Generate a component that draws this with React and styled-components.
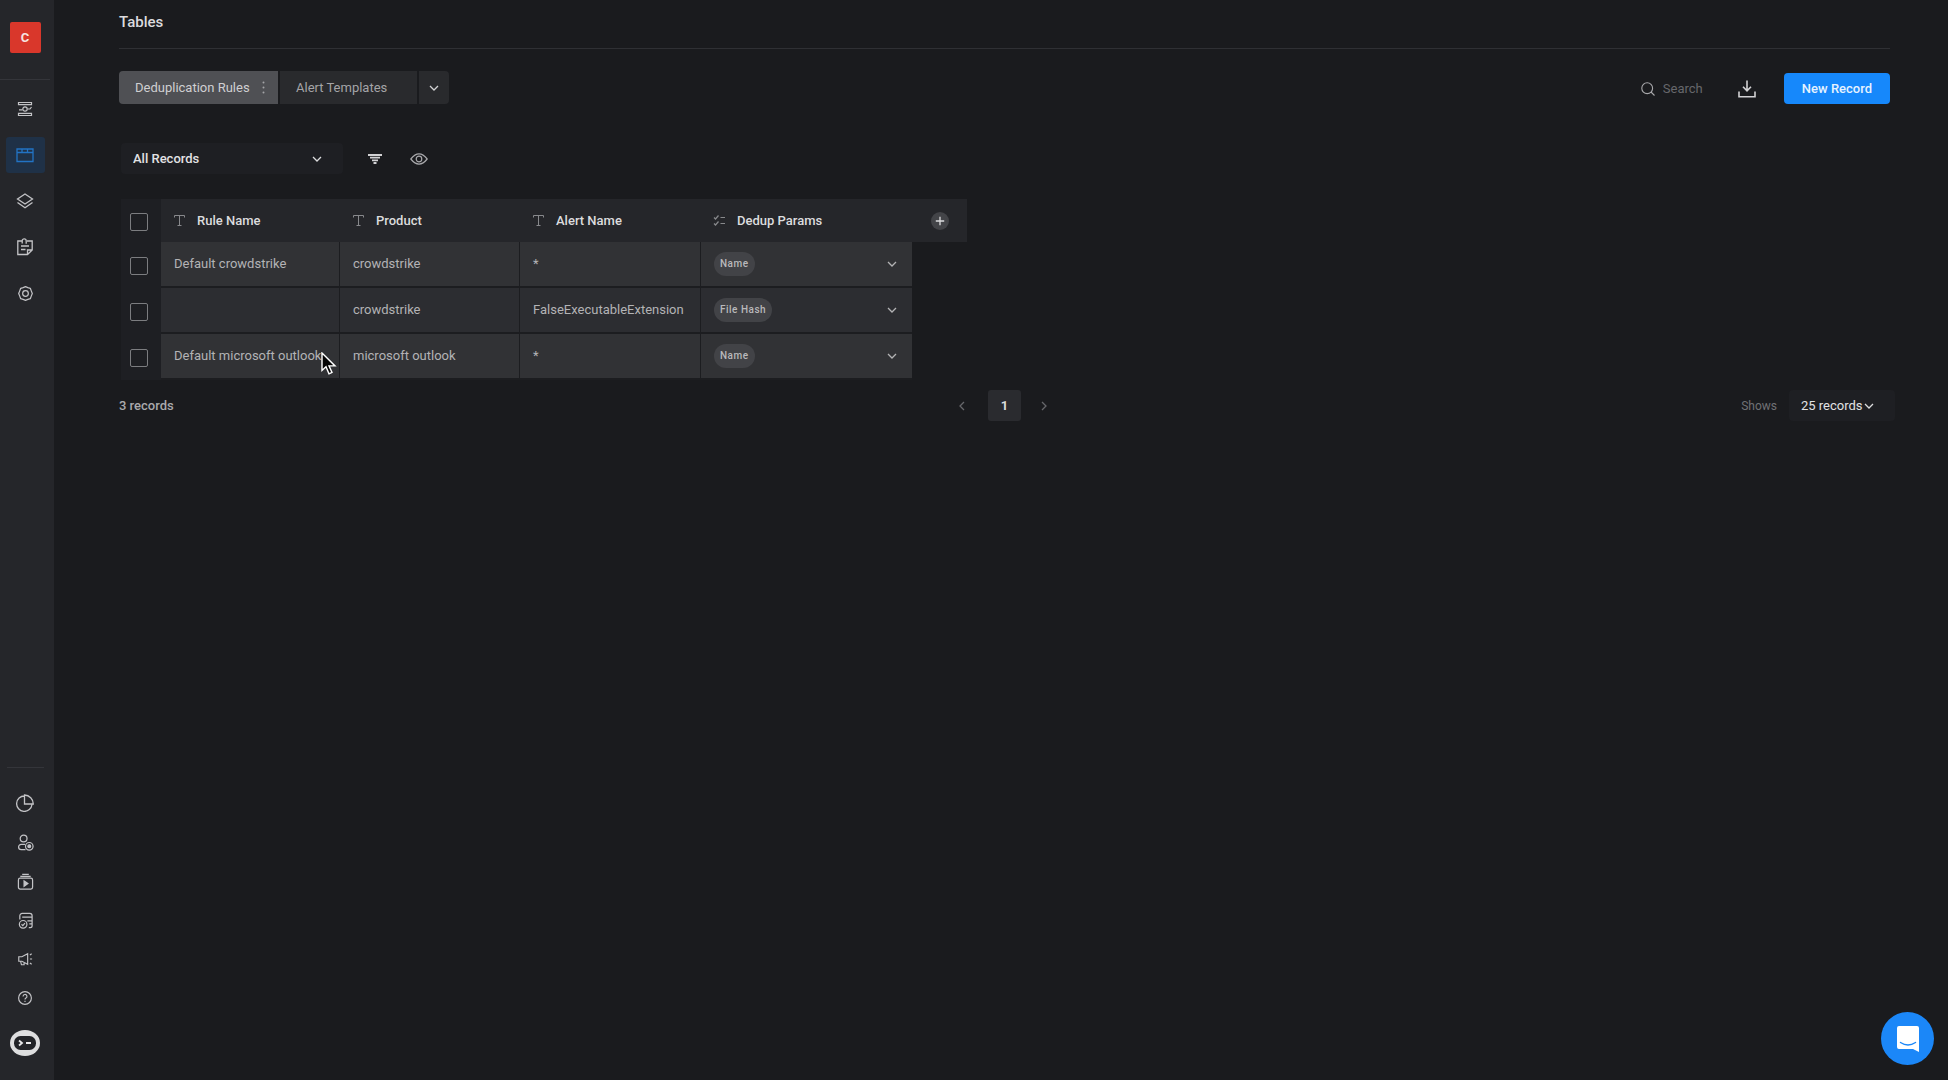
import React from "react";
import styled, { createGlobalStyle } from "styled-components";

const Global = createGlobalStyle`
  * { box-sizing: border-box; }
  body {
    margin: 0;
    background: #1a1b1e;
    color: #dcdcde;
    font: 13px/16px Roboto, "Liberation Sans", sans-serif;
  }
  button, input, select { font: inherit; color: inherit; }
  button { border: 0; padding: 0; background: none; cursor: pointer; }
  svg { display: block; flex: none; }
`;

const Shell = styled.div`
  display: flex;
  min-height: 100vh;
`;

const Sidebar = styled.nav`
  display: flex;
  flex-direction: column;
  align-items: center;
  width: 54px;
  padding: 22px 4px 24px 0;
  background: #25262a;
`;

const Workspace = styled.button`
  width: 31px;
  height: 31px;
  border-radius: 2px;
  background: #d9372b;
  color: #f6e3e0;
  font-weight: 700;
`;

const SideRule = styled.hr`
  width: ${(p) => (p.$short ? "37px" : "50px")};
  height: 1px;
  margin: ${(p) => (p.$short ? "auto 0 20px" : "26px 0 11px")};
  border: 0;
  background: #34353a;
`;

const SideGroup = styled.div`
  display: flex;
  flex-direction: column;
  align-items: center;
  gap: ${(p) => (p.$tight ? "9px" : "10px")};
`;

const SideLink = styled.a`
  display: grid;
  place-items: center;
  width: 39px;
  height: ${(p) => (p.$small ? "30px" : "36px")};
  border-radius: 3px;
  background: ${(p) => (p.$active ? "#1f3147" : "transparent")};
  color: ${(p) => (p.$active ? "#2273c4" : "#c3c3c6")};
`;

const Avatar = styled.button`
  display: grid;
  place-items: center;
  width: 30px;
  height: 26px;
  margin-top: 17px;
  border-radius: 50%;
  background: #dededf;
`;

const Main = styled.main`
  flex: 1;
  min-width: 0;
  padding: 0 58px 0 65px;
`;

const PageHeader = styled.header`
  padding: 13px 0 17px;
  border-bottom: 1px solid #2f3034;
`;

const Title = styled.h1`
  margin: 0;
  font-size: 15px;
  line-height: 18px;
  font-weight: 500;
`;

const TopBar = styled.div`
  display: flex;
  align-items: center;
  justify-content: space-between;
  margin-top: 22px;
`;

const Tabs = styled.div`
  display: flex;
  gap: 2px;
`;

const Tab = styled.button`
  display: flex;
  align-items: center;
  justify-content: space-between;
  width: ${(p) => p.$width};
  height: 33px;
  padding: 0 10px 0 16px;
  border-radius: ${(p) => (p.$active ? "4px 0 0 4px" : "0")};
  background: ${(p) => (p.$active ? "#4f5054" : "#292a2d")};
  color: ${(p) => (p.$active ? "#cfcfd1" : "#a4a4a7")};
`;

const MoreTabs = styled.button`
  display: grid;
  place-items: center;
  width: 30px;
  height: 33px;
  border-radius: 0 4px 4px 0;
  background: #292a2d;
  color: #d2d2d4;
`;

const Actions = styled.div`
  display: flex;
  align-items: center;
  padding-top: 2px;
`;

const SearchBox = styled.label`
  display: flex;
  align-items: center;
  gap: 8px;
  color: #a9a9ac;
`;

const SearchInput = styled.input`
  width: 72px;
  padding: 0;
  border: 0;
  outline: 0;
  background: none;
  &::placeholder { color: #66676b; opacity: 1; }
`;

const IconButton = styled.button`
  display: grid;
  place-items: center;
  width: 24px;
  height: 24px;
  color: ${(p) => p.$color || "#d2d2d4"};
`;

const Primary = styled.button`
  height: 31px;
  margin-left: 25px;
  padding: 0 18px;
  border-radius: 4px;
  background: #1688fb;
  color: #e6f3ff;
  font-weight: 500;
`;

const Filters = styled.div`
  display: flex;
  align-items: center;
  gap: 20px;
  margin-top: 39px;
  padding-left: 2px;
`;

const Picker = styled.div`
  display: grid;
  grid-template-columns: 1fr ${(p) => p.$inset};
  align-items: center;
  width: ${(p) => p.$width};
  height: 31px;
  border-radius: 4px;
  background: #1e1f23;

  select {
    grid-area: 1 / 1 / 2 / 3;
    width: 100%;
    height: 31px;
    padding: 0 12px;
    border: 0;
    outline: 0;
    appearance: none;
    background: none;
    font-weight: ${(p) => (p.$plain ? 400 : 500)};
    color: #e2e2e4;
  }
  option { background: #25262a; }
  svg {
    grid-area: 1 / 2 / 2 / 3;
    pointer-events: none;
  }
`;

const Table = styled.table`
  table-layout: fixed;
  width: 846px;
  margin: 25px 0 0 2px;
  border-spacing: 0;
`;

const HeadCell = styled.th`
  width: ${(p) => p.$width};
  height: 43px;
  padding: 0 0 0 12px;
  background: #25262a;
  text-align: left;
  font-weight: 500;
`;

const HeadLabel = styled.span`
  display: flex;
  align-items: center;
  gap: 11px;
  svg { color: #88898c; }
`;

const CheckHead = styled.th`
  width: 40px;
  padding: 2px 0 0 9px;
  background: #1e1f23;
`;

const CheckCell = styled.td`
  padding: 2px 0 0 9px;
  background: #1e1f23;
`;

const Check = styled.input.attrs({ type: "checkbox" })`
  display: block;
  width: 18px;
  height: 18px;
  margin: 0;
  appearance: none;
  border: 1px solid #7c7d80;
  border-radius: 2px;
  &:checked { background: #1688fb; }
`;

const Cell = styled.td`
  position: relative;
  height: 46px;
  padding: 0 0 0 13px;
  border-right: ${(p) => (p.$last ? 0 : "1px")} solid #1c1d20;
  border-bottom: 2px solid #1c1d20;
  background: ${(p) => (p.$alt ? "#2c2d31" : "#313235")};
  color: #b3b3b5;
  white-space: nowrap;
`;

const ParamPicker = styled.button`
  display: flex;
  align-items: center;
  justify-content: space-between;
  width: 100%;
  padding-right: 14px;
`;

const Chip = styled.span`
  padding: 4px 6px;
  border-radius: 12px;
  background: #424347;
  color: #b9b9bb;
  font-size: 10px;
  font-weight: 500;
  letter-spacing: 0.5px;
`;

const AddColumn = styled.button`
  display: grid;
  place-items: center;
  width: 18px;
  height: 18px;
  margin-left: 7px;
  border-radius: 50%;
  background: #434448;
`;

const Cursor = styled.svg`
  position: absolute;
  left: 160px;
  top: 18px;
  z-index: 1;
`;

const Footer = styled.footer`
  display: grid;
  grid-template-columns: 1fr auto 1fr;
  align-items: center;
  margin-top: 10px;
`;

const Count = styled.span`
  color: #a9a9ac;
  font-weight: 500;
`;

const Pager = styled.div`
  display: flex;
  align-items: center;
  gap: 14px;
`;

const Page = styled.button`
  width: 33px;
  height: 31px;
  border-radius: 3px;
  background: #2a2b2f;
  font-weight: 700;
`;

const PageSize = styled.div`
  display: flex;
  align-items: center;
  justify-content: flex-end;
  gap: 12px;
  margin-right: -5px;
  label {
    color: #707175;
    font-size: 12px;
  }
`;

const Chat = styled.button`
  position: fixed;
  right: 14px;
  bottom: 15px;
  display: grid;
  place-items: center;
  width: 53px;
  height: 53px;
  border-radius: 50%;
  background: #1b87f8;
`;

const Icon = ({ size = 18, w = 1.3, box = 18, children }) => (
  <svg
    width={size}
    height={size}
    viewBox={`0 0 ${box} ${box}`}
    fill="none"
    stroke="currentColor"
    strokeWidth={w}
    aria-hidden="true"
  >
    {children}
  </svg>
);

const Chevron = ({ d = "M2 4l4 4 4-4", w = 1.3 }) => (
  <Icon size={12} box={12} w={w}><path d={d} /></Icon>
);

const TextType = () => (
  <Icon size={13} box={13} w={1}>
    <path d="M1.5 3.5v-2h10v2M6.5 1.5v10M4.5 11.5h4" />
  </Icon>
);

const ListType = () => (
  <Icon size={13} box={13} w={1.2}>
    <path d="M1 3.5l1.5 1.5L5.5 1.5M7.5 3.5H12M1 9.5 2.5 11l3-3.5M7.5 9.5H12" />
  </Icon>
);

const mainNav = [
  ["Workflows", <Icon size={16} box={16} w={1.2}><path d="M1.5 1.5h13v2.2h-13zM1.5 12.3h13v2.2h-13zM2 8.8h3.5M10.5 8H13l1.5-2" /><circle cx="8" cy="8" r="2.2" /></Icon>],
  ["Tables", <Icon><path d="M1 3h16v12.5H1zM1 6.5h16M6 3v3.5M11.5 3v3.5" /></Icon>],
  ["Layers", <Icon><path d="M9 2 16.5 7 9 12 1.5 7zM1.5 10.5 9 15.8l7.5-5.3" /></Icon>],
  ["Notes", <Icon><path d="M6 3H1.8v13.5h9.7l4.7-4.5V3H11M5 8h8M5 11.5h4.5M11.5 16.5V12h4.7M6.2 5.5V2.8a2 2 0 0 1 4 0v3" /></Icon>],
  ["Settings", <Icon size={17}><path d="M9 1.8l2.5.9 2.6.8 1 2.7L16.2 9l-1.1 2.8-1 2.7-2.6.8-2.5.9-2.5-.9-2.6-.8-1-2.7L1.8 9l1.1-2.8 1-2.7 2.6-.8z" strokeLinejoin="round" /><circle cx="9" cy="9" r="3" /></Icon>],
];

const toolNav = [
  ["Reports", <Icon><path d="M8.5 2A7.7 7.7 0 1 0 16 10.5M8.5 1v9h8.8A9 9 0 0 0 8.5 1z" /></Icon>],
  ["Users", <Icon size={17}><circle cx="7" cy="4.8" r="3.6" /><path d="M8.5 11h-4a2.8 2.8 0 0 0 0 5.6H9" /><circle cx="13" cy="13" r="4" /><circle cx="13" cy="13" r="1.5" fill="currentColor" /></Icon>],
  ["Playbooks", <Icon size={17}><path d="M5.5 1.4h7M3.5 3.5h11" /><rect x="1.5" y="5.5" width="15" height="11.5" rx="1.8" /><path d="M7.5 8.5V14l4-2.8z" fill="currentColor" /></Icon>],
  ["Audit", <Icon size={17}><path d="M3 8V4a2.5 2.5 0 0 1 2.5-2.5h8A2.5 2.5 0 0 1 16 4v10.5a2 2 0 0 1-2 2h-1.5M5.5 5.5H16M11 9.5h5M13 12.5h3" /><circle cx="6.5" cy="13" r="4" /><path d="M4.8 13l1.4 1.4 2.2-2.6" /></Icon>],
  ["Announcements", <Icon size={16}><path d="M2 6.5h3.5L12 3v12l-6.5-3.5H2zM4 11.5l1 4h3v-3M14.5 4.5l2-1.5M14.5 9H17M14.5 13.5l2 1.5" /></Icon>],
  ["Help", <Icon size={16}><circle cx="9" cy="9" r="7.2" /><path d="M6.8 7.2a2.2 2.2 0 1 1 3.3 1.9c-.8.5-1.1.8-1.1 1.6M9 12.2v1.3" /></Icon>],
];

const rows = [
  ["Default crowdstrike", "crowdstrike", "*", "Name"],
  ["", "crowdstrike", "FalseExecutableExtension", "File Hash"],
  ["Default microsoft outlook", "microsoft outlook", "*", "Name"],
];

const columns = [
  ["Rule Name", "179px", TextType],
  ["Product", "180px", TextType],
  ["Alert Name", "181px", TextType],
  ["Dedup Params", "211px", ListType],
];

const SideLinks = ({ items, small, active }) =>
  items.map(([name, icon]) => (
    <SideLink key={name} href="#" aria-label={name} $small={small} $active={name === active}>
      {icon}
    </SideLink>
  ));

export default function App() {
  return (
    <>
      <Global />
      <Shell>
        <Sidebar>
          <Workspace>C</Workspace>
          <SideRule />
          <SideGroup><SideLinks items={mainNav} active="Tables" /></SideGroup>
          <SideRule $short />
          <SideGroup $tight><SideLinks items={toolNav} small /></SideGroup>
          <Avatar aria-label="Account">
            <svg width="22" height="14" viewBox="0 0 22 14">
              <rect width="22" height="14" rx="6.5" fill="#222327" />
              <path d="M5 4.5 8 7 5 9.5M12 7h5" fill="none" stroke="#e8e8e9" strokeWidth="1.8" />
            </svg>
          </Avatar>
        </Sidebar>

        <Main>
          <PageHeader><Title>Tables</Title></PageHeader>

          <TopBar>
            <Tabs>
              <Tab $active $width="159px">
                Deduplication Rules
                <svg width="9" height="13" viewBox="0 0 9 13" fill="#a4a4a7" aria-hidden="true">
                  <circle cx="4.5" cy="1.5" r="1" /><circle cx="4.5" cy="6.5" r="1" /><circle cx="4.5" cy="11.5" r="1" />
                </svg>
              </Tab>
              <Tab $width="137px">Alert Templates</Tab>
              <MoreTabs aria-label="More tables"><Chevron /></MoreTabs>
            </Tabs>
            <Actions>
              <SearchBox>
                <Icon size={14} box={14} w={1.1}><circle cx="6.2" cy="6.2" r="5.4" /><path d="M10 10l3.5 3.5" /></Icon>
                <SearchInput aria-label="Search" placeholder="Search" />
              </SearchBox>
              <IconButton aria-label="Download">
                <Icon w={1.6}><path d="M9 .5v10M5 6.8l4 4 4-4M1 11.5v5.2h16v-5.2" /></Icon>
              </IconButton>
              <Primary>New Record</Primary>
            </Actions>
          </TopBar>

          <Filters>
            <Picker $width="222px" $inset="32px">
              <select aria-label="View"><option>All Records</option></select>
              <Chevron />
            </Picker>
            <IconButton aria-label="Filter">
              <Icon size={14} box={14} w={1.8}><path d="M0 3h14M2 5.7h10M4 8.4h6M5.5 11h3" /></Icon>
            </IconButton>
            <IconButton aria-label="Visible fields" $color="#a9a9ac">
              <Icon w={1.2}><path d="M.8 9Q9-1.2 17.2 9 9 19.2.8 9z" strokeLinejoin="round" /><circle cx="9" cy="9" r="2.8" /></Icon>
            </IconButton>
          </Filters>

          <Table>
            <thead>
              <tr>
                <CheckHead><Check aria-label="Select all" /></CheckHead>
                {columns.map(([name, width, TypeIcon]) => (
                  <HeadCell key={name} $width={width}>
                    <HeadLabel><TypeIcon />{name}</HeadLabel>
                  </HeadCell>
                ))}
                <HeadCell $width="55px">
                  <AddColumn aria-label="Add column">
                    <Icon size={10} box={10} w={1.3}><path d="M5 .8v8.4M.8 5h8.4" /></Icon>
                  </AddColumn>
                </HeadCell>
              </tr>
            </thead>
            <tbody>
              {rows.map(([rule, product, alert, param], i) => (
                <tr key={i}>
                  <CheckCell><Check aria-label={`Select row ${i + 1}`} /></CheckCell>
                  <Cell $alt={i === 1}>
                    {rule}
                    {i === 2 && (
                      <Cursor width="16" height="24" viewBox="0 0 16 24" aria-hidden="true">
                        <path d="M1 1v17.5l4-3.7 3 7 3-1.3-3-6.6h6z" fill="#050505" stroke="#fff" strokeWidth="1.4" />
                      </Cursor>
                    )}
                  </Cell>
                  <Cell $alt={i === 1}>{product}</Cell>
                  <Cell $alt={i === 1}>{alert}</Cell>
                  <Cell $alt={i === 1} $last>
                    <ParamPicker><Chip>{param}</Chip><Chevron /></ParamPicker>
                  </Cell>
                </tr>
              ))}
            </tbody>
          </Table>

          <Footer>
            <Count>3 records</Count>
            <Pager>
              <IconButton aria-label="Previous page" $color="#66676b"><Chevron d="M8 2 4 6l4 4" /></IconButton>
              <Page>1</Page>
              <IconButton aria-label="Next page" $color="#66676b"><Chevron d="M1 2l4 4-4 4" /></IconButton>
            </Pager>
            <PageSize>
              <label htmlFor="page-size">Shows</label>
              <Picker $plain $width="106px" $inset="32px">
                <select id="page-size"><option>25 records</option></select>
                <Chevron />
              </Picker>
            </PageSize>
          </Footer>
        </Main>
      </Shell>

      <Chat aria-label="Open chat">
        <svg width="24" height="28" viewBox="0 0 24 28">
          <path d="M3 1h18a2 2 0 0 1 2 2v24l-6-3H3a2 2 0 0 1-2-2V3a2 2 0 0 1 2-2z" fill="#fff" />
          <path d="M4.5 17.5q7.5 5 15 0" fill="none" stroke="#1b87f8" strokeWidth="1.5" strokeLinecap="round" />
        </svg>
      </Chat>
    </>
  );
}
